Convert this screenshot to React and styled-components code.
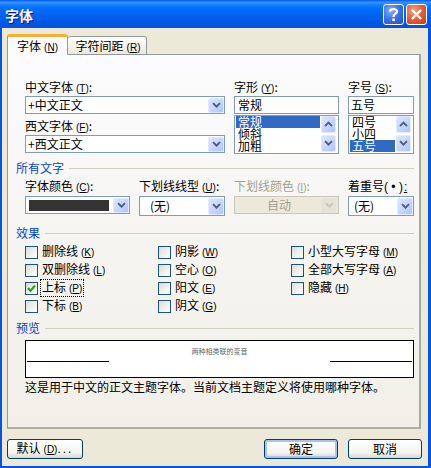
import React from 'react';
import styled, { createGlobalStyle } from 'styled-components';

const Global = createGlobalStyle`
  html, body { margin: 0; padding: 0; background: #0055e5; }
  * { box-sizing: border-box; }
  #root { width: 431px; height: 468px; }
`;
const FONT = `"Noto Sans CJK SC", "Liberation Sans", sans-serif`;

const Win = styled.div`
  width: 431px; height: 468px; display: flex; flex-direction: column;
  background: #0055e5; font-family: ${FONT}; font-size: 12px; color: #000; overflow: hidden;
`;
const TitleBar = styled.div`
  height: 28px; flex: none; display: flex; align-items: flex-start; padding: 4px 4px 0 5px;
  background: linear-gradient(180deg, #0058ee 0%, #3593ff 8%, #288eff 12%, #127dff 18%, #036ffc 30%, #0262ee 55%, #0057e5 80%, #0054e3 90%, #0055d4 100%);
`;
const Title = styled.div`
  flex: 1; color: #fff; font-weight: 700; font-size: 14px; text-shadow: 1px 1px 0 #0f1089; line-height: 22px;
`;
const TitleButton = styled.div`
  width: 21px; height: 21px; margin-left: 2px; border: 1px solid #fff; border-radius: 3px;
  display: flex; align-items: center; justify-content: center;
  background: ${p => p.$close
    ? 'radial-gradient(circle at 35% 30%, #f0a58a 0%, #e0633a 45%, #c63a12 100%)'
    : 'radial-gradient(circle at 35% 30%, #8cb0f5 0%, #3c6fe0 50%, #2350c8 100%)'};
`;
const Client = styled.div`
  flex: 1; margin: 0 3px 2px 2px; background: #ece9d8; padding: 6px 6px 0 5px;
  display: flex; flex-direction: column;
`;
const Tabs = styled.div`
  display: flex; align-items: flex-end; height: 21px; position: relative; z-index: 1; margin-bottom: -1px;
`;
const Tab = styled.div`
  height: ${p => p.$active ? 21 : 19}px; width: ${p => p.$w}px; flex: none;
  border: 1px solid #919b9c; border-bottom: ${p => p.$active ? 'none' : '1px solid #919b9c'}; border-left: ${p => p.$active ? '1px solid #919b9c' : 'none'};
  border-top: ${p => p.$active ? '3px solid #f7b030' : '1px solid #919b9c'};
  border-radius: 3px 3px 0 0; text-align: center; white-space: nowrap;
  background: ${p => p.$active ? '#fcfcfe' : 'linear-gradient(180deg, #fff, #ece9d8)'};
  line-height: 17px; padding-left: ${p => p.$active ? 0 : 2}px;
`;
const Panel = styled.div`
  width: 414px; height: 375px; flex: none; border: 1px solid #919b9c; border-right: 2px solid #a9a89f; border-bottom: 2px solid #b0afa6;
  background: linear-gradient(180deg, #fcfcfe 0%, #f4f3ee 60%, #f1efe8 100%);
  padding: 24px 5px 0 8px;
`;
const Indent = styled.div`padding-left: 9px;`;
const FontGrid = styled.div`
  display: grid; grid-template-columns: 200px 105px 66px; column-gap: 9px; height: 75px;
`;
const Stack = styled.div`display: flex; flex-direction: column;`;
const Label = styled.div`
  height: ${p => p.$h || 17}px; line-height: 16px; white-space: nowrap; color: ${p => p.$disabled ? '#a1a192' : '#000'};
`;
const Field = styled.div`
  height: ${p => p.$h || 18}px; border: 1px solid ${p => p.$disabled ? '#c9c7ba' : '#7f9db9'}; background: ${p => p.$disabled ? '#ece9d8' : '#fff'};
  display: flex; align-items: center; padding-left: 2px; line-height: 16px;
  color: ${p => p.$disabled ? '#a1a192' : '#000'};
  margin-bottom: ${p => p.$mb || 0}px;
`;
const FieldText = styled.span`flex: 1; white-space: nowrap; padding-left: ${p => p.$pl || 0}px; text-align: ${p => p.$center ? 'center' : 'left'};`;
const Btn = styled.div`
  width: ${p => p.$w || 15}px; height: ${p => p.$h || 14}px; flex: none; border-radius: 2px; border: 1px solid ${p => p.$disabled ? '#e8e6d8' : '#e1eafe'};
  background: ${p => p.$disabled ? '#e4e2d6' : 'linear-gradient(135deg, #dce7fd 0%, #c3d4fb 60%, #afc4f6 100%)'};
  display: flex; align-items: center; justify-content: center;
`;
const DropGap = styled.div`width: ${p => p.$w}px; flex: none;`;
const Swatch = styled.div`width: 80px; height: 11px; background: #333; margin: 0 4px 0 1px; flex: none;`;
const ListBox = styled.div`
  height: 39px; margin-top: 1px; border: 1px solid #7f9db9; background: #fff; display: flex; padding: 0 2px 0 1px;
`;
const ListItems = styled.div`flex: 1; display: flex; flex-direction: column; min-width: 0;`;
const ListItem = styled.div`
  height: 12px; line-height: 12px; padding-left: 2px; flex: none;
  background: ${p => p.$sel ? '#316ac5' : 'transparent'}; color: ${p => p.$sel ? '#fff' : '#000'};
`;
const ScrollCol = styled.div`width: 15px; margin-left: 1px; display: flex; flex-direction: column; gap: 2px; flex: none;`;
const Section = styled.div`
  display: flex; align-items: center; height: 14px; margin-top: ${p => p.$mt || 0}px;
`;
const SectionTitle = styled.div`color: #0046d5; white-space: nowrap; line-height: 14px;`;
const Rule = styled.div`flex: 1; height: 1px; background: #d0d0bf; margin-left: 5px;`;
const FormGrid = styled.div`
  display: grid; grid-template-columns: 105px 86px 105px 66px; column-gap: 9px; margin-top: 3px; height: 38px;
`;
const ChecksGrid = styled.div`
  display: grid; grid-template-columns: 133px 133px 1fr; margin-top: 3px; height: 72px;
`;
const CheckRow = styled.div`
  display: flex; align-items: center; height: 18px; white-space: nowrap;
`;
const Box = styled.div`
  width: 13px; height: 13px; border: 1px solid #1c5180; margin-right: 2px; flex: none;
  background: linear-gradient(135deg, #dcdcd7 0%, #f5f5f2 70%, #fff 100%);
  display: flex; align-items: center; justify-content: center;
`;
const CheckLabel = styled.span`
  padding: 0 1px; line-height: 14px; border: 1px ${p => p.$focus ? 'dotted #000' : 'solid transparent'};
`;
const Preview = styled.div`
  width: 389px; height: 38px; border: 1px solid #000; background: #fff; margin-top: 5px;
  position: relative; display: flex; justify-content: center;
`;
const PreviewLine = styled.div`
  position: absolute; top: 20px; width: 82px; height: 1px; background: #000; ${p => p.$right ? 'right: 1px;' : 'left: 1px;'}
`;
const PreviewText = styled.div`
  font-size: 7px; line-height: 8px; color: #666; margin-top: 6px; white-space: nowrap;
`;
const Note = styled.div`margin-top: 2px; height: 14px; line-height: 14px; white-space: nowrap;`;
const Footer = styled.div`display: flex; padding-top: 10px;`;
const PushButton = styled.button`
  width: ${p => p.$w}px; height: 20px; border: 1px solid #003c74; border-radius: 3px; padding: 0;
  margin-left: ${p => p.$ml || 0}px; font: inherit; color: #000; line-height: 16px; white-space: nowrap;
  background: linear-gradient(180deg, #fff 0%, #f4f4f0 70%, #dcd8c8 100%);
  box-shadow: ${p => p.$def ? 'inset 0 0 0 2px #a9c3ec' : 'none'};
`;
const Mnemonic = styled.span`font-family: "Liberation Sans", sans-serif; font-size: 10px; margin-left: 3px;`;
const MnLetter = styled.span`text-decoration: underline;`;
const Dots = styled.span`font-family: "Liberation Sans", sans-serif; letter-spacing: 2px;`;
const EmMark = styled.span`font-family: "Liberation Sans", sans-serif; white-space: pre;`;
const Colon = styled.span`font-family: "Liberation Sans", sans-serif; text-decoration: underline; padding-left: 1px;`;
const Spacer = styled.div`flex: 1;`;

const M = ({ k }) => <Mnemonic>(<MnLetter>{k}</MnLetter>)</Mnemonic>;

const Chevron = ({ up, color = '#4d6185', w = 9 }) => (
  <svg width={w} height={w * 0.7} viewBox="0 0 9 6">
    <path d={up ? 'M1 5 L4.5 1.5 L8 5' : 'M1 1 L4.5 4.5 L8 1'} fill="none" stroke={color} strokeWidth="2" />
  </svg>
);
const DropBtn = ({ disabled, h = 15, w = 16 }) => (
  <Btn $w={w} $h={h} $disabled={disabled}><Chevron color={disabled ? '#c9c7ba' : '#4d6185'} /></Btn>
);
const Check = ({ label, k, checked, focus }) => (
  <CheckRow>
    <Box>{checked && (
      <svg width="9" height="9" viewBox="0 0 9 9"><path d="M1 4 L3.5 7 L8 1.5" fill="none" stroke="#21a121" strokeWidth="2" /></svg>
    )}</Box>
    <CheckLabel $focus={focus}>{label}<M k={k} /></CheckLabel>
  </CheckRow>
);
const List = ({ items, sel }) => (
  <ListBox>
    <ListItems>{items.map(t => <ListItem key={t} $sel={t === sel}>{t}</ListItem>)}</ListItems>
    <ScrollCol>
      <Btn $w={15} $h={17}><Chevron up /></Btn>
      <Btn $w={15} $h={17}><Chevron /></Btn>
    </ScrollCol>
  </ListBox>
);

export default function App() {
  return (
    <Win>
      <Global />
      <TitleBar>
        <Title>字体</Title>
        <TitleButton>
          <svg width="13" height="15" viewBox="0 0 13 15"><path d="M3 4.5 C3 1.5 10 1 10 4.5 C10 7 6.5 6.5 6.5 10" fill="none" stroke="#fff" strokeWidth="2.2" /><rect x="5.3" y="11.5" width="2.6" height="2.6" fill="#fff" /></svg>
        </TitleButton>
        <TitleButton $close>
          <svg width="13" height="13" viewBox="0 0 13 13"><path d="M2 2 L11 11 M11 2 L2 11" stroke="#fff" strokeWidth="2.4" /></svg>
        </TitleButton>
      </TitleBar>
      <Client>
        <Tabs>
          <Tab $active $w={61}>字体<M k="N" /></Tab>
          <Tab $w={79}>字符间距<M k="R" /></Tab>
        </Tabs>
        <Panel>
          <Indent>
            <FontGrid>
              <Stack>
                <Label>中文字体<M k="T" />:</Label>
                <Field $mb={4}><FieldText>+中文正文</FieldText><DropBtn /></Field>
                <Label>西文字体<M k="F" />:</Label>
                <Field><FieldText>+西文正文</FieldText><DropBtn /></Field>
              </Stack>
              <Stack>
                <Label>字形<M k="Y" />:</Label>
                <Field><FieldText $pl={1}>常规</FieldText></Field>
                <List items={['常规', '倾斜', '加粗']} sel="常规" />
              </Stack>
              <Stack>
                <Label>字号<M k="S" />:</Label>
                <Field><FieldText>五号</FieldText></Field>
                <List items={['四号', '小四', '五号']} sel="五号" />
              </Stack>
            </FontGrid>
          </Indent>
          <Section $mt={7}><SectionTitle>所有文字</SectionTitle><Rule /></Section>
          <Indent>
            <FormGrid>
              <Stack>
                <Label $h={18}>字体颜色<M k="C" />:</Label>
                <Field><Swatch /><DropBtn /><DropGap $w={1} /></Field>
              </Stack>
              <Stack>
                <Label $h={18}>下划线线型<M k="U" />:</Label>
                <Field $h={20}><FieldText $pl={8}>(无)</FieldText><DropBtn h={17} /></Field>
              </Stack>
              <Stack>
                <Label $h={18} $disabled>下划线颜色<M k="I" />:</Label>
                <Field $disabled><FieldText $center>自动</FieldText><DropBtn disabled /><DropGap $w={1} /></Field>
              </Stack>
              <Stack>
                <Label $h={18}>着重号<EmMark>( • )</EmMark><Colon>:</Colon></Label>
                <Field $h={20}><FieldText $pl={3}>(无)</FieldText><DropBtn h={17} /></Field>
              </Stack>
            </FormGrid>
          </Indent>
          <Section $mt={10}><SectionTitle>效果</SectionTitle><Rule /></Section>
          <Indent>
            <ChecksGrid>
              <Stack>
                <Check label="删除线" k="K" />
                <Check label="双删除线" k="L" />
                <Check label="上标" k="P" checked focus />
                <Check label="下标" k="B" />
              </Stack>
              <Stack>
                <Check label="阴影" k="W" />
                <Check label="空心" k="O" />
                <Check label="阳文" k="E" />
                <Check label="阴文" k="G" />
              </Stack>
              <Stack>
                <Check label="小型大写字母" k="M" />
                <Check label="全部大写字母" k="A" />
                <Check label="隐藏" k="H" />
              </Stack>
            </ChecksGrid>
          </Indent>
          <Section $mt={6}><SectionTitle>预览</SectionTitle><Rule /></Section>
          <Indent>
            <Preview>
              <PreviewLine />
              <PreviewText>两种相类联的变音</PreviewText>
              <PreviewLine $right />
            </Preview>
            <Note>这是用于中文的正文主题字体。当前文档主题定义将使用哪种字体。</Note>
          </Indent>
        </Panel>
        <Footer>
          <PushButton $w={76}>默认<M k="D" /><Dots>...</Dots></PushButton>
          <Spacer />
          <PushButton $w={74} $def>确定</PushButton>
          <PushButton $w={74} $ml={10}>取消</PushButton>
        </Footer>
      </Client>
    </Win>
  );
}
